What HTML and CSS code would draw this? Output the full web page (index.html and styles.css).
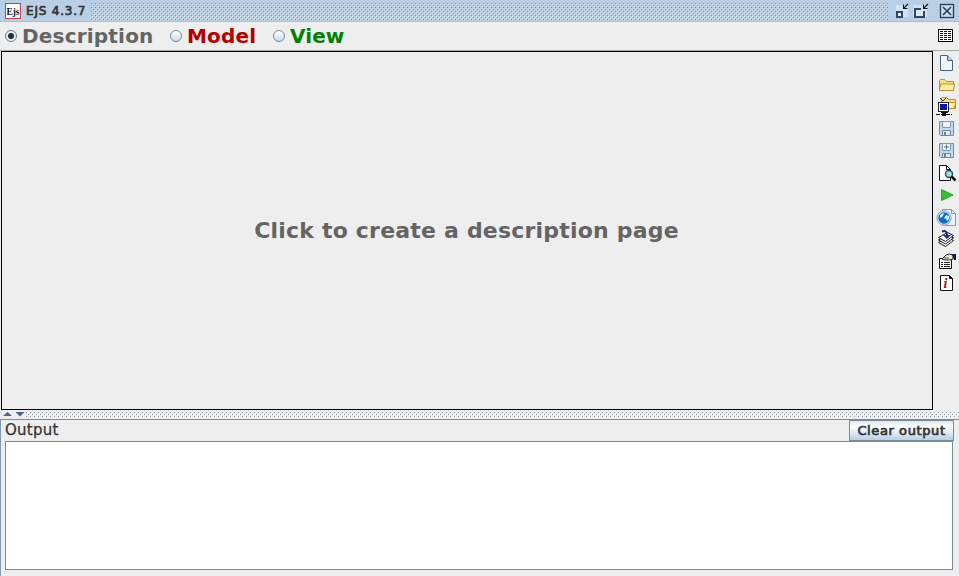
FILE: index.html
```html
<!DOCTYPE html>
<html lang="en">
<head>
<meta charset="utf-8">
<title>EJS 4.3.7</title>
<link rel="stylesheet" href="styles.css">
</head>
<body>
<div class="window">
  <header class="titlebar">
    <svg class="logo" width="16" height="16" viewBox="0 0 16 16"><rect x=".5" y=".5" width="15" height="15" fill="#fff" stroke="#c04050"/><text x="1.5" y="11.500" class="logo-text" textLength="13" lengthAdjust="spacingAndGlyphs">Ejs</text></svg>
    <h1 class="title">EJS 4.3.7</h1>
    <div class="grip"></div>
    <div class="controls">
      <svg width="16" height="16" viewBox="0 0 16 16"><path d="M3 2h12v12H3z" fill="#d3e2f2"/><rect x="4" y="9" width="5" height="5" fill="#e5eefa" stroke="#344668" stroke-width="2"/><path d="M15 1l-4 4M10.500 1.500v4h4" fill="none" stroke="#111820" stroke-width="1.100"/></svg>
      <svg width="18" height="16" viewBox="0 0 18 16"><path d="M2 2h14v12H2z" fill="#d3e2f2"/><path d="M10 6H4v8h9V8" fill="#dce8f6" stroke="#344668" stroke-width="2"/><path d="M17 1l-4 4M12.500 1.500v4h4" fill="none" stroke="#111820" stroke-width="1.100"/></svg>
      <svg class="close" width="16" height="16" viewBox="0 0 16 16"><rect x="1.500" y="1.500" width="13" height="13" fill="#cbdcef" stroke="#283b58" stroke-width="1.300"/><path d="M4 4l8 8M12 4l-8 8" stroke="#283b58" stroke-width="1.600"/></svg>
    </div>
  </header>
  <nav class="modes">
    <div class="mode description"><span class="radio selected"></span><span>Description</span></div>
    <div class="mode model"><span class="radio"></span><span>Model</span></div>
    <div class="mode view"><span class="radio"></span><span>View</span></div>
    <svg class="list" width="16" height="14" viewBox="0 0 16 14"><rect x=".5" y=".5" width="14" height="12" fill="#fff" stroke="#000"/><path d="M2 2.500h3m1 0h3m1 0h3M2 4.500h3m1 0h3m1 0h3M2 6.500h3m1 0h3m1 0h3M2 8.500h3m1 0h3m1 0h3M2 10.500h3m1 0h3m1 0h3" stroke="#111"/></svg>
  </nav>
  <div class="workspace">
    <main class="canvas"><span>Click to create a description page</span></main>
    <aside class="tools">
      <svg viewBox="0 0 22 22"><path d="M5.500 3.500h7l5 5v10h-12z" fill="#eef6fc" stroke="#46627e"/><path d="M12.500 3.500v5h5" fill="#b6d4e9" stroke="#46627e"/></svg>
      <svg viewBox="0 0 22 22"><path d="M4.500 16.500v-10l1-1h4l2 2h7v9z" fill="#f6df87" stroke="#b8912f"/><path d="M4.500 16.500l1-6.500h14l-1 6.500z" fill="#fff0a3" stroke="#b8912f"/></svg>
      <svg viewBox="0 0 22 22"><path d="M6.500 13V2.500l1-1h4l2 2h7v9z" fill="#f6df87" stroke="#b8912f"/><path d="M9 12.500l2-6h10l-2 6z" fill="#fff0a3" stroke="#b8912f"/><path d="M5 2l3 3 3-3" fill="none" stroke="#333"/><rect x="3.500" y="6.500" width="10" height="9" fill="#fff" stroke="#222"/><path d="M5 8h7v6H5z" fill="#1010a0"/><path d="M9 15v4M6 16.500h7" stroke="#111"/><path d="M1 18.500h16" stroke="#111" stroke-dasharray="4 1"/><path d="M7 18.500h4" stroke="#111" stroke-width="3"/></svg>
      <svg viewBox="0 0 22 22"><path d="M4.500 3.500h14v14h-13l-1-1z" fill="#c3d8ee" stroke="#738eac"/><path d="M7.500 3.500h8v6h-8z" fill="#edf4fb" stroke="#809ab5"/><path d="M7.500 17.500v-5h8v5z" fill="#dfe9f2" stroke="#6c87a4"/><path d="M9 14h2v3H9z" fill="#67829f"/></svg>
      <svg viewBox="0 0 22 22"><path d="M4.500 3.500h14v14h-13l-1-1z" fill="#c3d8ee" stroke="#738eac"/><path d="M7.500 3.500h8v7h-8z" fill="#edf4fb" stroke="#809ab5"/><path d="M11.500 4.500v5M9 7h5" stroke="#527192"/><path d="M7.500 17.500v-4h8v4z" fill="#dfe9f2" stroke="#6c87a4"/><path d="M9 14h2v3H9z" fill="#67829f"/></svg>
      <svg viewBox="0 0 22 22"><path d="M4.500 3.500h7l4 4v11h-11z" fill="#fff" stroke="#111"/><path d="M11.500 3.500v4h4" fill="none" stroke="#111"/><circle cx="14" cy="12" r="3.500" fill="#a6dddd" stroke="#28545d" stroke-width="1.400"/><path d="M16.500 14.500l4 4" stroke="#111" stroke-width="2.500"/></svg>
      <svg viewBox="0 0 22 22"><path d="M6.500 5.500v11l11.500-5.500z" fill="#37bd36" stroke="#25a52f"/></svg>
      <svg viewBox="0 0 22 22"><path d="M7.500 3.500h9l4 4v12h-13z" fill="#eef2fa" stroke="#8a98b4"/><path d="M16.500 3.500v4h4" fill="none" stroke="#8a98b4"/><circle cx="9" cy="12" r="7.200" fill="#bfdfff" stroke="#90acd2"/><circle cx="9" cy="12" r="5.700" fill="#1768bd"/><path d="M5 9l3-2 1 1-2 3-2 1zM11 9l3 1v3l-2 2-1-2-2-1z" fill="#d7edfb"/></svg>
      <svg viewBox="0 0 22 22"><g fill="#fff" stroke="#151515"><path d="M3.500 14.500l7 4 8-6-6-3z"/><path d="M3.500 12l7 4 8-6-6-3z"/><path d="M3.500 9.500l7 4 8-6-6-3z"/></g><path d="M7 3.500q5-2 5 4" fill="none" stroke="#25258a" stroke-width="2"/><path d="M8 7h8L12 11z" fill="#25258a"/></svg>
      <svg viewBox="0 0 22 22"><path d="M4.500 8.500h12v10h-12z" fill="#fff" stroke="#111"/><path d="M6 12.500h2m1 0h6M6 14.500h2m1 0h6M6 16.500h2m1 0h6" stroke="#222"/><path d="M7 9l4-4 3-1 4 1v4l-3 1h-5z" fill="#eee7cf" stroke="#222"/><path d="M9 8h5" stroke="#555"/><path d="M17 4h4v6h-2z" fill="#14146f"/></svg>
      <svg viewBox="0 0 22 22"><path d="M5.500 3.500h9l3 3v12h-12z" fill="#fff" stroke="#111"/><path d="M14.500 3.500v3h3" fill="#111" stroke="#111"/><text x="8.500" y="16" class="info">i</text></svg>
    </aside>
  </div>
  <div class="divider"><svg width="26" height="9" viewBox="0 0 26 9"><path d="M3 6l4.500-4L12 6z" fill="#4b628f"/><path d="M15.500 2h9L20 6.500z" fill="#4b628f"/></svg><div class="split-dots"></div></div>
  <section class="output">
    <div class="output-head"><label>Output</label><button>Clear output</button></div>
    <div class="log"></div>
  </section>
</div>
</body>
</html>
```

FILE: styles.css
```css
* { box-sizing: border-box; }
body { margin: 0; font-family: "DejaVu Sans", sans-serif; color: #333; background: #eee; }
.window { width: 959px; height: 576px; display: flex; flex-direction: column; overflow: hidden; }
svg { display: block; flex: none; }
.titlebar { height: 22px; flex: none; display: flex; align-items: flex-start; padding: 0 4px 0 5px; background: #b8cfe5; border-bottom: 1px solid #a9bed4; }
.logo { margin-top: 3px; }
.logo-text { font: bold 10px "Liberation Serif", serif; fill: #111; }
.title { width: 66px; margin: 3px 0 0 5px; font-size: 12px; line-height: 16px; font-weight: normal; letter-spacing: .8px; -webkit-text-stroke: .65px #333; white-space: nowrap; }
.grip {
  width: 799px; height: 17px; margin: 3px 0 0 -1px;
  background: conic-gradient(from 270deg at 1px 1px, #6c8cbd 90deg, transparent 0) 0 0 / 4px 4px,
    conic-gradient(from 270deg at 1px 1px, #6c8cbd 90deg, transparent 0) 2px 2px / 4px 4px,
    conic-gradient(from 270deg at 1px 1px, #dceaf7 90deg, transparent 0) 1px 1px / 4px 4px,
    conic-gradient(from 270deg at 1px 1px, #dceaf7 90deg, transparent 0) 3px 3px / 4px 4px;
}
.controls { display: flex; margin: 3px 0 0 5px; gap: 2px; }
.close { margin-left: 8px; }
.modes { height: 29px; flex: none; display: flex; align-items: center; padding: 0 5px 1px; border-bottom: 1px solid #aaa; }
.mode { display: flex; align-items: center; font-size: 20px; line-height: 24px; font-weight: bold; white-space: nowrap; }
.mode .radio { width: 12px; height: 12px; margin-right: 5px; border: 1px solid #7a8a99; border-radius: 50%; background: linear-gradient(#fff, #c9dced); }
.mode .selected { border-color: #6c7c8d; background: radial-gradient(circle, #263241 0 2.7px, #e3edf6 3.4px); }
.description { width: 165px; color: #646464; letter-spacing: .2px; }
.model { width: 103px; color: #b20000; letter-spacing: .2px; }
.view { color: #008000; letter-spacing: .1px; }
.list { margin-left: auto; }
.workspace { height: 359px; flex: none; display: flex; padding-left: 1px; }
.canvas { width: 932px; border: 1px solid #000; display: grid; place-items: center; color: #646464; font-size: 22px; line-height: 26px; font-weight: bold; letter-spacing: .2px; }
.canvas span { margin-right: 1px; }
.tools { width: 26px; padding: 1px 0 0 2px; display: flex; flex-direction: column; }
.tools svg { width: 22px; height: 22px; }
.info { font: italic bold 14px "Liberation Serif", serif; fill: #8d1822; }
.divider { height: 9px; flex: none; display: flex; }
.split-dots {
  flex: 1; margin-top: 2px; height: 6px;
  background: conic-gradient(from 270deg at 1px 1px, #939ead 90deg, transparent 0) 0 0 / 4px 4px,
    conic-gradient(from 270deg at 1px 1px, #939ead 90deg, transparent 0) 2px 2px / 4px 4px,
    conic-gradient(from 270deg at 1px 1px, #fff 90deg, transparent 0) 1px 1px / 4px 4px,
    conic-gradient(from 270deg at 1px 1px, #fff 90deg, transparent 0) 3px 3px / 4px 4px;
}
.output { height: 157px; flex: none; border-top: 1px solid #7a8a99; border-left: 1px solid #8998a7; padding: 0 6px 5px 4px; }
.output-head { height: 21px; display: flex; justify-content: space-between; font-size: 15px; line-height: 21px; }
.output-head label { letter-spacing: .25px; -webkit-text-stroke: .25px #333; }
button { width: 105px; height: 21px; margin-right: -1px; padding: 0; border: 1px solid #7a8a99; background: linear-gradient(#dde8f3, #fff 30%, #b8cfe5); color: #333; font: 13px/18px "DejaVu Sans", sans-serif; letter-spacing: .6px; -webkit-text-stroke: .7px #333; }
.log { height: 129px; background: #fff; border: 1px solid #7a8a99; }
```
